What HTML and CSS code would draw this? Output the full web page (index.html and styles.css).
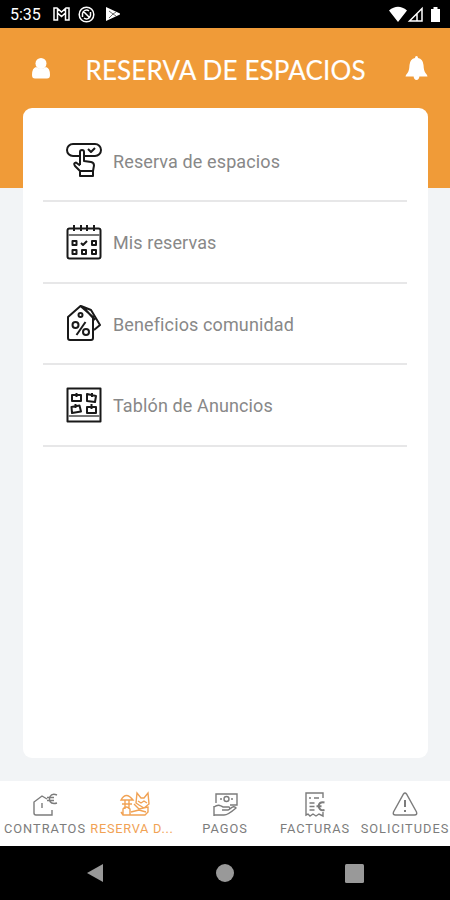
FILE: index.html
```html
<!DOCTYPE html>
<html lang="es">
<head>
<meta charset="utf-8">
<title>Reserva de espacios</title>
<link rel="stylesheet" href="styles.css">
</head>
<body>
<div class="app">
  <div class="status">
    <span class="clock">5:35</span>
    <svg class="gmail" width="17" height="14" viewBox="0 0 17 14"><path d="M1 1h3l4.500 4 4.500-4h3v12h-3.500v-7l-4 3.500-4-3.500v7H1zM4.500 2v4M12.500 2v4"/></svg>
    <svg class="sync" width="17" height="17" viewBox="0 0 17 17"><circle cx="8.500" cy="8.500" r="7.300"/><path d="M4.500 11V7.500a4 4 0 0 1 6.500-2.500M12.500 6v3.500a4 4 0 0 1-6.500 2.500M5.500 5.500l6 6"/></svg>
    <svg class="play" width="14" height="14" viewBox="0 0 14 14"><path fill="#fff" d="M0 0l14 6.500v1L0 14z"/><path d="M3 4l4 3-4 4M7 7l3-2M7 7l3 2" fill="none" stroke="#444" stroke-width=".8"/></svg>
    <svg class="signals" width="53" height="17" viewBox="0 0 53 17"><path fill="#fff" d="M0 4.500Q9-3 18 4.500L9 16zM42 3h2.500V1h4v2H51v13h-9z"/><path d="M20.500 15L33 2.500V15zM28 7v8" fill="none" stroke="#fff" stroke-width="1.500"/></svg>
  </div>
  <header class="header">
    <svg class="user" width="18" height="21" viewBox="0 0 18 21"><circle cx="9" cy="5.500" r="5.500"/><path d="M4 9Q0 10 0 17q0 3.500 3 3.500h12q3 0 3-3.500 0-7-4-8-5 3-10 0z"/></svg>
    <h1>RESERVA DE ESPACIOS</h1>
    <svg class="bell" width="23" height="24" viewBox="0 0 23 24"><path d="M11.500 0q1.500 0 1.500 2 5 1 5.500 7 .3 6 2 8 2 2 2 3.500H.500Q.500 19 2.500 17q1.700-2 2-8Q5 3 10 2q0-2 1.500-2zM8.500 20h6q-.5 4-3 4t-3-4z"/></svg>
  </header>
  <main class="card">
    <ul>
      <li><svg viewBox="0 0 36 36"><path d="M13 14H7A6 6 0 0 1 7 2h22a6 6 0 0 1 0 12H19M22 7l3 3 4-4M14 23V10q0-2 2-2t2 2v9l7 1q3 .5 3 3.500l-1 5.500H14l-5-5q-2-3 1-3.500l4 3M14 29h13v5H14z"/></svg><span>Reserva de espacios</span></li>
      <li><svg viewBox="0 0 36 36"><rect x="1.500" y="4.500" width="33" height="30" rx="2"/><path d="M2 11h32" class="thin"/><path d="M8 1v6M15 1v6M21 1v6M28 1v6M6.500 17h4v4h-4zM26 17h4v4h-4zM6.500 26h4v4h-4zM16 26h4v4h-4zM26 26h4v4h-4zM15 19l2 2 4-4"/></svg><span>Mis reservas</span></li>
      <li><svg viewBox="0 0 36 36"><path d="M2 33V12L14.500 1 27 12v21q0 2-2 2H4q-2 0-2-2zM15 1l10 4 9 15-6 5M18 3l11 12"/><circle cx="14.500" cy="10" r="2"/><circle cx="9.500" cy="20" r="3"/><circle cx="20" cy="27" r="3"/><path d="M19.500 17l-9 13"/></svg><span>Beneficios comunidad</span></li>
      <li><svg viewBox="0 0 36 36"><rect x="1.500" y="1.500" width="33" height="33"/><path d="M2 29h32" class="thin"/><path d="M6 8h9v6H6zM21 7l9 2-1 6-8-1zM5.500 20l8-1.500 1.500 6-9 1.500zM21 20h9v6h-9zM10.500 6v4M26 6v4M9.500 17v4M25.500 17v5"/></svg><span>Tablón de Anuncios</span></li>
    </ul>
  </main>
  <nav class="tabs">
    <a><svg viewBox="0 0 32 28"><path d="M18 9L13 6 5 12v11q0 2 2 2h16v-5M13 13v5M28 5q-5-2-7 1.500-1 2.500 0 5 2 3 7 1.500M18 7.500h7M18 10.500h7"/></svg><span>CONTRATOS</span></a>
    <a class="active"><svg viewBox="0 0 32 28"><path d="M2 10q5-9 12 0zM6 10v9M10 10v9M3 14h10M4 19q3-4 7 0v6H4zM17 13l1-10 4 5h3l4-5 1 11-5 4-5-3zM15 14l5 5 9-2v5l-3 3H4l-2-3M19 11l3 2 3-2 3 2M12 22l8-2 7 2"/></svg><span>RESERVA D...</span></a>
    <a><svg viewBox="0 0 32 28"><path d="M7 13V4h21v11h-7M5 17q4-3 7-1l2 1h6q2 2-1 3h-6M5 25h10q4 0 12-7-2-3-6 1M5 16v10M11 9h2M22 9h2"/><circle cx="17.500" cy="9" r="2.500"/></svg><span>PAGOS</span></a>
    <a><svg viewBox="0 0 32 28"><path d="M24 8V3H7v22l2-1 2 2 3-2 3 2 3-2 4 2v-4M10 8h2M15 8h5M10.500 13h5M10.500 16.500h5M10.500 20h5"/><path d="M25.500 12.500q-5-1-6 3.500 1 5 6 4M17.500 16.300h5" class="mark"/></svg><span>FACTURAS</span></a>
    <a><svg viewBox="0 0 32 28"><path d="M14.500 4q1.500-2 3 0l10 18q1 3-2 3h-19q-3 0-2-3z"/><path d="M16 10v7M16 20v2" class="mark"/></svg><span>SOLICITUDES</span></a>
  </nav>
  <div class="system">
    <svg width="18" height="20" viewBox="0 0 18 20"><path d="M17 1v18L1 10z"/></svg>
    <svg width="18" height="18" viewBox="0 0 18 18"><circle cx="9" cy="9" r="9"/></svg>
    <svg width="19" height="19" viewBox="0 0 19 19"><rect width="19" height="19" rx="1.500"/></svg>
  </div>
</div>
</body>
</html>
```
FILE: styles.css
```css
* { box-sizing: border-box; }
body { margin: 0; font-family: Roboto, sans-serif; }
svg { display: block; flex: none; }
.app { width: 450px; height: 900px; display: flex; flex-direction: column; background: linear-gradient(#f09b38 188px, #f2f4f6 188px); overflow: hidden; }
.status { height: 28px; flex: none; background: #000; display: flex; align-items: center; padding: 0 8px 0 10px; }
.clock { color: #fff; font-size: 16px; width: 43px; padding-top: 1px; }
.gmail, .sync { fill: none; stroke: #fff; stroke-width: 1.5; }
.sync { margin-left: 8px; }
.play { margin-left: 11px; }
.signals { margin-left: auto; }
.header { height: 80px; flex: none; display: flex; align-items: center; padding: 2px 22px 0 32px; }
.header svg { fill: #fff; }
.user, .bell { margin-bottom: 2px; }
.bell { margin-left: auto; }
h1 { margin: 1px 0 0 35.5px; color: #fff; font: 400 26px "Lato", sans-serif; letter-spacing: .15px; white-space: nowrap; -webkit-text-stroke: .15px #fff; }
.card { height: 650px; flex: none; margin: 0 22px 23px 23px; background: #fff; border-radius: 9px; padding: 12.5px 21px 0 20px; }
ul { list-style: none; margin: 0; padding: 0; }
li { height: 81.5px; border-bottom: 2px solid #e7e7e8; display: flex; align-items: center; gap: 11px; padding: 0 0 0 23px; color: #888; font-size: 18px; letter-spacing: .12px; }
li span { padding-top: 2px; }
li svg { width: 36px; height: 36px; fill: none; stroke: #191919; stroke-width: 2; stroke-linejoin: round; }
li .thin { stroke: #777; }
.tabs { height: 65px; flex: none; display: grid; grid-template-columns: repeat(5, 90px); background: #fff; }
.tabs a { display: flex; flex-direction: column; align-items: center; color: #7c7c7c; font-size: 12.8px; letter-spacing: 1px; padding-top: 9px; white-space: nowrap; }
.tabs svg { width: 32px; height: 28px; fill: none; stroke: currentColor; stroke-width: 1.4; }
.tabs span { line-height: 15px; margin-top: 3px; }
.tabs .mark { stroke-width: 2; }
.tabs .active { color: #f1a254; }
.tabs .active span { letter-spacing: .7px; margin-left: -6px; }
.system { flex: 1; background: #000; display: flex; justify-content: space-between; align-items: center; padding: 0 86px; }
.system svg { fill: #999; }
```
